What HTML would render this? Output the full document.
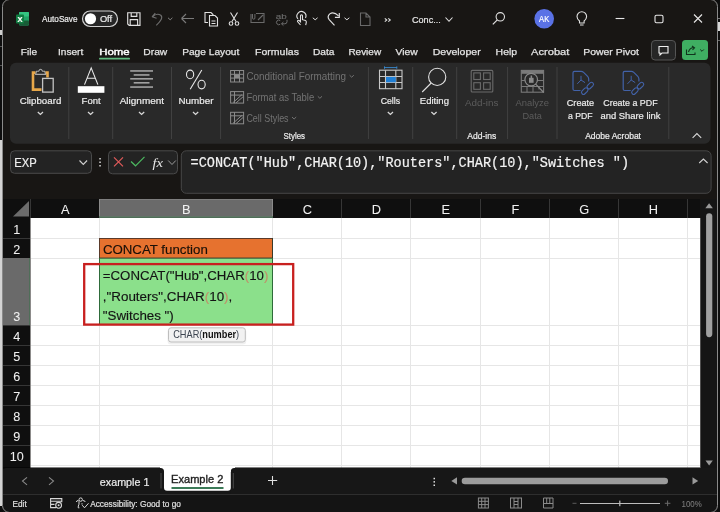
<!DOCTYPE html>
<html><head><meta charset="utf-8"><title>Excel CONCAT</title>
<style>html,body{margin:0;padding:0;background:#0d0d0d;width:720px;height:512px;overflow:hidden}svg{display:block;will-change:transform}</style>
</head><body><svg width="720" height="512" viewBox="0 0 720 512" font-family='"Liberation Sans", sans-serif'><rect x="0" y="0" width="720" height="512" fill="#0d0d0d"/>
<rect x="0" y="140" width="2" height="366" fill="#d4d4d4"/>
<rect x="0" y="30" width="2" height="5" fill="#cfcfcf"/>
<rect x="0" y="46" width="2" height="1" fill="#555555"/>
<rect x="0" y="65" width="2" height="1" fill="#555555"/>
<rect x="718" y="18" width="2" height="1" fill="#777777"/>
<rect x="718" y="22" width="2" height="9" fill="#d8d8d8"/>
<rect x="718" y="40" width="2" height="1" fill="#666666"/>
<rect x="2" y="-1" width="716" height="514" fill="#181614" rx="7"/>
<rect x="19" y="12" width="10" height="13.5" fill="#21a366" rx="1"/>
<rect x="19" y="12" width="10" height="4.5" fill="#33c481" rx="1"/>
<rect x="19" y="20.5" width="10" height="4.5" fill="#185c37" rx="1"/>
<rect x="16" y="14.5" width="8" height="9" fill="#107c41" rx="1"/>
<text x="17.6" y="22.3" font-size="7.5" fill="#ffffff" font-weight="bold" stroke="#ffffff" stroke-width="0.2">X</text>
<text x="42.1" y="22.15" font-size="8.9" fill="#ececec" textLength="35.4" lengthAdjust="spacingAndGlyphs" stroke="#ececec" stroke-width="0.2">AutoSave</text>
<rect x="82.5" y="11" width="35" height="15.5" fill="#262626" rx="7.75" stroke="#cfcfcf" stroke-width="1.2"/>
<circle cx="90.5" cy="18.75" r="5.6" fill="#ffffff"/>
<text x="99.9" y="22.15" font-size="9.1" fill="#ececec" textLength="12.2" lengthAdjust="spacingAndGlyphs" stroke="#ececec" stroke-width="0.2">Off</text>
<path d="M127.7 12.7 H140 V25.4 H129.2 L127.7 23.9 Z M131.2 12.7 V16.4 H136.8 V12.7 M130.2 25.4 V19.6 H137.6 V25.4" stroke="#e0e0e0" stroke-width="1.15" fill="none"/>
<path d="M152 16.8 L155.3 13.2 M152 16.8 L156.6 18.2 M152.4 16.7 Q157 12.6 160.8 15.3 Q164 18.2 156.3 25.3" stroke="#6e6e6e" stroke-width="1.15" fill="none"/>
<path d="M168 17.8 l2.2 2 l2.2 -2" stroke="#8a8a8a" stroke-width="0.9" fill="none"/>
<path d="M181.5 18.5 h12.5 M181.5 18.5 l4.5 -4.5 M181.5 18.5 l4.5 4.5" stroke="#7a7a7a" stroke-width="1.1" fill="none"/>
<path d="M208 22.5 h-3 v-10 h6 l2 2 v1" stroke="#e0e0e0" stroke-width="1.1" fill="none"/>
<path d="M209.5 15.5 h5.5 l2.5 2.5 v8 h-8 z" stroke="#e0e0e0" stroke-width="1.1" fill="none"/>
<path d="M211.5 21 h4 M211.5 23.5 h4" stroke="#e0e0e0" stroke-width="1" fill="none"/>
<path d="M230.5 12.5 l5.5 9 M237.5 12.5 l-5.5 9" stroke="#e0e0e0" stroke-width="1.1" fill="none"/>
<circle cx="231" cy="23.5" r="1.8" stroke="#e0e0e0" stroke-width="1.1" fill="none"/><circle cx="237" cy="23.5" r="1.8" stroke="#e0e0e0" stroke-width="1.1" fill="none"/>
<path d="M251 14 v8.5 h13 v-9 h-8 M258 20 l5 -5" stroke="#6a6a6a" stroke-width="1.1" fill="none"/>
<path d="M252.5 14 v4 a1.2 1.2 0 0 0 2.4 0 v-4" stroke="#6a6a6a" stroke-width="1" fill="none"/>
<text x="275.8" y="18.6" font-size="7.6" fill="#6e6e6e" textLength="11" lengthAdjust="spacingAndGlyphs" stroke="#6e6e6e" stroke-width="0.1">ab</text>
<path d="M280.2 20.6 a2.3 2.3 0 1 0 0 3.6" stroke="#6e6e6e" stroke-width="1" fill="none"/>
<path d="M287 19.8 v1.8 q0 2.2 -2.2 2.2 h-3.2 M283.4 22 l-1.9 1.8 l1.9 1.8" stroke="#6e6e6e" stroke-width="1" fill="none"/>
<path d="M298 19 a4.5 4.5 0 1 1 7.5 -1 M300.5 25 l-3 -3.5 a1 1 0 0 1 1.6 -1 l1.4 1.2 v-6 a1 1 0 0 1 2 0 v4 l3 .8 q1 .4 .8 1.8 l-.6 2.8" stroke="#e0e0e0" stroke-width="1.1" fill="none"/>
<path d="M312.8 17.8 l2.4 2 l2.4 -2" stroke="#e0e0e0" stroke-width="1" fill="none"/>
<path d="M334.5 25.3 L329.2 19.6 Q326.8 16.6 329.8 13.9 Q333.6 11.2 338.6 15.9" stroke="#e0e0e0" stroke-width="1.15" fill="none"/>
<path d="M339.3 12.9 V17.3 H334.9" stroke="#e0e0e0" stroke-width="1.15" fill="none"/>
<path d="M344.5 17.8 l2.4 2 l2.4 -2" stroke="#e0e0e0" stroke-width="1" fill="none"/>
<path d="M360.5 13 h5.5 l4 4 v8.5 h-9.5 z M366 13 v4 h4" stroke="#6a6a6a" stroke-width="1.1" fill="none"/>
<path d="M384.8 18.3 l2 1.7 l-2 1.7 M388.3 18.3 l2 1.7 l-2 1.7" stroke="#e0e0e0" stroke-width="1.1" fill="none"/>
<text x="412" y="22.8" font-size="9.7" fill="#e8e8e8" textLength="28.8" lengthAdjust="spacingAndGlyphs" stroke="#e8e8e8" stroke-width="0.2">Conc...</text>
<path d="M445.5 17.5 l3.5 3.8 l3.5 -3.8" stroke="#e0e0e0" stroke-width="1.1" fill="none"/>
<circle cx="500.3" cy="16.8" r="4.2" stroke="#e0e0e0" stroke-width="1.1" fill="none"/>
<path d="M497.3 19.8 l-4.5 4.5" stroke="#e0e0e0" stroke-width="1.2" fill="none"/>
<circle cx="544.2" cy="18.7" r="9.8" fill="#5a72e6"/>
<text x="539.1" y="22" font-size="8.9" fill="#ffffff" textLength="10.1" lengthAdjust="spacingAndGlyphs" stroke="#ffffff" stroke-width="0.2">AK</text>
<path d="M579.5 21 q-2.5 -2 -2.5 -4.5 a4.8 4.8 0 0 1 9.6 0 q0 2.5 -2.5 4.5 v2 h-4.6 z M580 25 h3.6" stroke="#e0e0e0" stroke-width="1.1" fill="none"/>
<path d="M615.6 18.5 h8.8" stroke="#e8e8e8" stroke-width="1.1" fill="none"/>
<rect x="655" y="15.2" width="8" height="7.5" fill="none" rx="1.5" stroke="#e8e8e8" stroke-width="1.1"/>
<path d="M694 14.5 l8 8 M702 14.5 l-8 8" stroke="#e8e8e8" stroke-width="1.1" fill="none"/>
<text x="20.8" y="54.85" font-size="9.9" fill="#e4e4e4" textLength="16.2" lengthAdjust="spacingAndGlyphs" stroke="#e4e4e4" stroke-width="0.25">File</text>
<text x="58" y="54.85" font-size="9.9" fill="#e4e4e4" textLength="25.3" lengthAdjust="spacingAndGlyphs" stroke="#e4e4e4" stroke-width="0.25">Insert</text>
<text x="99.3" y="54.85" font-size="9.9" fill="#ffffff" textLength="30.3" lengthAdjust="spacingAndGlyphs" stroke="#ffffff" stroke-width="0.45">Home</text>
<text x="143.3" y="54.85" font-size="9.9" fill="#e4e4e4" textLength="24" lengthAdjust="spacingAndGlyphs" stroke="#e4e4e4" stroke-width="0.25">Draw</text>
<text x="182.2" y="54.85" font-size="9.9" fill="#e4e4e4" textLength="57.1" lengthAdjust="spacingAndGlyphs" stroke="#e4e4e4" stroke-width="0.25">Page Layout</text>
<text x="255.1" y="54.85" font-size="9.9" fill="#e4e4e4" textLength="43.8" lengthAdjust="spacingAndGlyphs" stroke="#e4e4e4" stroke-width="0.25">Formulas</text>
<text x="312.9" y="54.85" font-size="9.9" fill="#e4e4e4" textLength="21.5" lengthAdjust="spacingAndGlyphs" stroke="#e4e4e4" stroke-width="0.25">Data</text>
<text x="348.4" y="54.85" font-size="9.9" fill="#e4e4e4" textLength="32.7" lengthAdjust="spacingAndGlyphs" stroke="#e4e4e4" stroke-width="0.25">Review</text>
<text x="395.6" y="54.85" font-size="9.9" fill="#e4e4e4" textLength="22.2" lengthAdjust="spacingAndGlyphs" stroke="#e4e4e4" stroke-width="0.25">View</text>
<text x="432.7" y="54.85" font-size="9.9" fill="#e4e4e4" textLength="48" lengthAdjust="spacingAndGlyphs" stroke="#e4e4e4" stroke-width="0.25">Developer</text>
<text x="495.6" y="54.85" font-size="9.9" fill="#e4e4e4" textLength="21.5" lengthAdjust="spacingAndGlyphs" stroke="#e4e4e4" stroke-width="0.25">Help</text>
<text x="531.1" y="54.85" font-size="9.9" fill="#e4e4e4" textLength="38.3" lengthAdjust="spacingAndGlyphs" stroke="#e4e4e4" stroke-width="0.25">Acrobat</text>
<text x="583.3" y="54.85" font-size="9.9" fill="#e4e4e4" textLength="55.6" lengthAdjust="spacingAndGlyphs" stroke="#e4e4e4" stroke-width="0.25">Power Pivot</text>
<rect x="99" y="57.8" width="31" height="1.8" fill="#5fb97e" rx="0.9"/>
<rect x="651.5" y="40.5" width="24" height="19.5" fill="#262626" rx="3.5" stroke="#555555" stroke-width="1"/>
<path d="M659 46.5 h9 v6.5 h-6 l-2 2 v-2 h-1 z" stroke="#f0f0f0" stroke-width="1.1" fill="none"/>
<rect x="682" y="40" width="26" height="20" fill="#3fae62" rx="3.5"/>
<path d="M686.5 49.5 v5 h8.5 v-2 M688.5 52 q1 -4 5 -4.5 M692 46 l2.5 1.8 l-2 2" stroke="#10331c" stroke-width="1.1" fill="none"/>
<path d="M700.2 49.5 l1.8 1.8 l1.8 -1.8" stroke="#10331c" stroke-width="1" fill="none"/>
<rect x="10" y="62.7" width="700.5" height="81" fill="#292929" rx="6"/>
<rect x="68.3" y="67" width="1" height="72" fill="#414141"/>
<rect x="112.2" y="67" width="1" height="72" fill="#414141"/>
<rect x="171.0" y="67" width="1" height="72" fill="#414141"/>
<rect x="220.1" y="67" width="1" height="72" fill="#414141"/>
<rect x="367.9" y="67" width="1" height="72" fill="#414141"/>
<rect x="412.2" y="67" width="1" height="72" fill="#414141"/>
<rect x="456.2" y="67" width="1" height="72" fill="#414141"/>
<rect x="507.1" y="67" width="1" height="72" fill="#414141"/>
<rect x="556.5" y="67" width="1" height="72" fill="#414141"/>
<rect x="668.3" y="67" width="1" height="72" fill="#414141"/>
<path d="M35.6 72.6 H33 V89.6 H41.5 M45.3 72.6 H47.5 V77.5" stroke="#e8a84a" stroke-width="2.6" fill="none" stroke-linejoin="miter"/>
<path d="M35.6 74.4 L36.6 71.2 H38.6 Q40.6 67.2 42.6 71.2 H44.6 L45.6 74.4 Z" stroke="#a8a8a8" stroke-width="1.1" fill="none"/>
<rect x="42.6" y="78.4" width="10.6" height="13.7" fill="#292929" stroke="#c4c4c4" stroke-width="1.3"/>
<text x="19.7" y="103.8" font-size="9.7" fill="#ececec" textLength="41.6" lengthAdjust="spacingAndGlyphs" stroke="#ececec" stroke-width="0.2">Clipboard</text>
<path d="M37.8 112 l2.6 2.4 l2.6 -2.4" stroke="#d8d8d8" stroke-width="1.3" fill="none"/>
<path d="M84.5 84.6 l6.7 -16.7 l6.7 16.7 M87 78.3 h8.5" stroke="#e8e8e8" stroke-width="1.1" fill="none"/>
<rect x="77.8" y="86.2" width="26.6" height="6.6" fill="#ffffff"/>
<text x="81.6" y="104" font-size="9.9" fill="#ececec" textLength="19" lengthAdjust="spacingAndGlyphs" stroke="#ececec" stroke-width="0.2">Font</text>
<path d="M88.0 112 l2.6 2.4 l2.6 -2.4" stroke="#d8d8d8" stroke-width="1.3" fill="none"/>
<rect x="130.2" y="70.30000000000001" width="22.8" height="1.3" fill="#bdbdbd"/>
<rect x="133.7" y="74.30000000000001" width="15.8" height="1.3" fill="#bdbdbd"/>
<rect x="130.2" y="78.2" width="22.8" height="1.3" fill="#bdbdbd"/>
<rect x="133.7" y="82.2" width="15.8" height="1.3" fill="#bdbdbd"/>
<rect x="130.2" y="86.4" width="22.8" height="1.3" fill="#bdbdbd"/>
<text x="119.7" y="104" font-size="9.9" fill="#ececec" textLength="44.4" lengthAdjust="spacingAndGlyphs" stroke="#ececec" stroke-width="0.2">Alignment</text>
<path d="M139.0 112 l2.6 2.4 l2.6 -2.4" stroke="#d8d8d8" stroke-width="1.3" fill="none"/>
<ellipse cx="190.1" cy="74.4" rx="3.6" ry="4.3" stroke="#e8e8e8" stroke-width="1.1" fill="none"/>
<ellipse cx="201.6" cy="84.6" rx="3.6" ry="4.3" stroke="#e8e8e8" stroke-width="1.1" fill="none"/>
<path d="M201.8 70 l-11.6 19.2" stroke="#e8e8e8" stroke-width="1.1" fill="none"/>
<text x="178.5" y="104" font-size="9.9" fill="#ececec" textLength="34.9" lengthAdjust="spacingAndGlyphs" stroke="#ececec" stroke-width="0.2">Number</text>
<path d="M193.0 112 l2.6 2.4 l2.6 -2.4" stroke="#d8d8d8" stroke-width="1.3" fill="none"/>
<rect x="230.6" y="70.5" width="13" height="11.5" fill="none" stroke="#8a8a8a" stroke-width="1"/>
<rect x="230.6" y="91.6" width="13" height="11.5" fill="none" stroke="#8a8a8a" stroke-width="1"/>
<rect x="230.6" y="112.3" width="13" height="11.5" fill="none" stroke="#8a8a8a" stroke-width="1"/>
<path d="M234.5 70.5 v11.5 M239.5 70.5 v11.5 M230.6 74.3 h13 M230.6 78.1 h13" stroke="#8a8a8a" stroke-width="1" fill="none"/>
<rect x="234.5" y="74.3" width="5" height="3.8" fill="#8a8a8a"/>
<path d="M230.6 95.1 h13 M234.5 91.6 v11.5 M233 102.6 l9 -8 M236 102.89999999999999 l7.5 -6.5" stroke="#8a8a8a" stroke-width="1" fill="none"/>
<path d="M230.6 115.8 h13 M234.5 112.3 v11.5 M233 123.3 l9 -8 M236 123.6 l7.5 -6.5" stroke="#8a8a8a" stroke-width="1" fill="none"/>
<text x="246.4" y="79.7" font-size="10.1" fill="#737373" textLength="99.6" lengthAdjust="spacingAndGlyphs">Conditional Formatting</text>
<text x="246.4" y="100.8" font-size="10.1" fill="#737373" textLength="67.8" lengthAdjust="spacingAndGlyphs">Format as Table</text>
<text x="246.4" y="121.5" font-size="10.1" fill="#737373" textLength="42.2" lengthAdjust="spacingAndGlyphs">Cell Styles</text>
<path d="M349.6 75.2 l2.1 2 l2.1 -2" stroke="#737373" stroke-width="1" fill="none"/>
<path d="M317.8 96.3 l2.1 2 l2.1 -2" stroke="#737373" stroke-width="1" fill="none"/>
<path d="M292 117 l2.1 2 l2.1 -2" stroke="#737373" stroke-width="1" fill="none"/>
<text x="283.6" y="138.8" font-size="8.4" fill="#ececec" textLength="21.4" lengthAdjust="spacingAndGlyphs" stroke="#ececec" stroke-width="0.2">Styles</text>
<rect x="379.5" y="70.2" width="22.5" height="18.5" fill="none" stroke="#c8c8c8" stroke-width="1.1"/>
<path d="M385.5 70.2 v18.5 M395.8 70.2 v18.5 M379.5 76.5 h22.5 M379.5 82.5 h22.5" stroke="#c8c8c8" stroke-width="1.1" fill="none"/>
<rect x="386" y="76.9" width="9.8" height="5.4" fill="#1f7fd6"/>
<path d="M384.5 67.6 h12.3 M384.5 66.4 v2.4 M396.8 66.4 v2.4" stroke="#3a8fd8" stroke-width="0.9" fill="none"/>
<text x="380.7" y="104" font-size="9.9" fill="#ececec" textLength="19.4" lengthAdjust="spacingAndGlyphs" stroke="#ececec" stroke-width="0.2">Cells</text>
<path d="M387.79999999999995 112 l2.6 2.4 l2.6 -2.4" stroke="#d8d8d8" stroke-width="1.3" fill="none"/>
<circle cx="437.2" cy="76.9" r="8.6" stroke="#e0e0e0" stroke-width="1.1" fill="none"/>
<path d="M431.2 83 l-9 9" stroke="#e0e0e0" stroke-width="1.1" fill="none"/>
<text x="419.8" y="104" font-size="9.9" fill="#ececec" textLength="29.2" lengthAdjust="spacingAndGlyphs" stroke="#ececec" stroke-width="0.2">Editing</text>
<path d="M431.4 112 l2.6 2.4 l2.6 -2.4" stroke="#d8d8d8" stroke-width="1.3" fill="none"/>
<rect x="471.2" y="70.4" width="21.6" height="21.6" fill="none" rx="1" stroke="#6a6a6a" stroke-width="1.1"/>
<rect x="473.8" y="72.9" width="6.6" height="6.6" fill="none" stroke="#6a6a6a" stroke-width="1.1"/>
<rect x="473.8" y="82.7" width="6.6" height="6.6" fill="none" stroke="#6a6a6a" stroke-width="1.1"/>
<rect x="483.6" y="72.9" width="6.6" height="6.6" fill="none" stroke="#6a6a6a" stroke-width="1.1"/>
<rect x="483.6" y="82.7" width="6.6" height="6.6" fill="none" stroke="#6a6a6a" stroke-width="1.1"/>
<text x="465" y="106" font-size="9.9" fill="#5c5c5c" textLength="33.4" lengthAdjust="spacingAndGlyphs">Add-ins</text>
<text x="467.2" y="138.8" font-size="8.4" fill="#ececec" textLength="29" lengthAdjust="spacingAndGlyphs" stroke="#ececec" stroke-width="0.2">Add-ins</text>
<rect x="521.3" y="70.4" width="22.3" height="21.8" fill="none" stroke="#7a7a7a" stroke-width="1.1"/>
<rect x="521.3" y="70.4" width="22.3" height="3.4" fill="#7a7a7a"/>
<path d="M521.3 80.5 h3.5 M537.5 80.5 h6.1 M521.3 86.5 h22.3 M527 86.5 v5.7 M533 86.5 v5.7 M539 86.5 v3" stroke="#7a7a7a" stroke-width="1" fill="none"/>
<circle cx="531.2" cy="79.6" r="6.3" stroke="#8a8a8a" stroke-width="1.2" fill="#292929"/>
<rect x="529" y="77.8" width="4.6" height="5" fill="#8a8a8a"/>
<rect x="530.6" y="75.5" width="1.5" height="2.5" fill="#8a8a8a"/>
<path d="M535.7 84.2 l8 8.3" stroke="#8a8a8a" stroke-width="1.2" fill="none"/>
<text x="515.4" y="106" font-size="9.9" fill="#5c5c5c" textLength="33.5" lengthAdjust="spacingAndGlyphs">Analyze</text>
<text x="522.4" y="118.8" font-size="9.9" fill="#5c5c5c" textLength="19.4" lengthAdjust="spacingAndGlyphs">Data</text>
<path d="M580.5 90.5 H574.5 Q573 90.5 573 89 V72.8 Q573 71.3 574.5 71.3 H581 Q582.5 71.3 583.6 72.4 L587.6 76.4 Q588.7 77.5 588.7 79 V81.5" stroke="#4262a8" stroke-width="1.2" fill="none"/>
<path d="M577.3 83.8 L581 80 L585 82.6 M581 80 V75.8" stroke="#4262a8" stroke-width="1" fill="none"/>
<rect x="581" y="89.1" width="7.5" height="4" rx="2" transform="rotate(-45 584.75 91.1)" stroke="#4262a8" stroke-width="1.1" fill="none"/>
<rect x="586.5" y="83.6" width="7.5" height="4" rx="2" transform="rotate(-45 590.25 85.6)" stroke="#4262a8" stroke-width="1.1" fill="none"/>
<path d="M630.7 90.5 H624.7 Q623.2 90.5 623.2 89 V72.8 Q623.2 71.3 624.7 71.3 H631.2 Q632.7 71.3 633.8000000000001 72.4 L637.8000000000001 76.4 Q638.9000000000001 77.5 638.9000000000001 79 V81.5" stroke="#4262a8" stroke-width="1.2" fill="none"/>
<path d="M627.5 83.8 L631.2 80 L635.2 82.6 M631.2 80 V75.8" stroke="#4262a8" stroke-width="1" fill="none"/>
<rect x="631.2" y="89.1" width="7.5" height="4" rx="2" transform="rotate(-45 634.95 91.1)" stroke="#4262a8" stroke-width="1.1" fill="none"/>
<rect x="636.7" y="83.6" width="7.5" height="4" rx="2" transform="rotate(-45 640.45 85.6)" stroke="#4262a8" stroke-width="1.1" fill="none"/>
<text x="566.8" y="106" font-size="9.6" fill="#ececec" textLength="27.3" lengthAdjust="spacingAndGlyphs" stroke="#ececec" stroke-width="0.2">Create</text>
<text x="568" y="118.8" font-size="9.6" fill="#ececec" textLength="24.6" lengthAdjust="spacingAndGlyphs" stroke="#ececec" stroke-width="0.2">a PDF</text>
<text x="603.3" y="106" font-size="9.6" fill="#ececec" textLength="54.3" lengthAdjust="spacingAndGlyphs" stroke="#ececec" stroke-width="0.2">Create a PDF</text>
<text x="600.5" y="118.8" font-size="9.6" fill="#ececec" textLength="60" lengthAdjust="spacingAndGlyphs" stroke="#ececec" stroke-width="0.2">and Share link</text>
<text x="585.2" y="138.8" font-size="8.4" fill="#ececec" textLength="55.8" lengthAdjust="spacingAndGlyphs" stroke="#ececec" stroke-width="0.2">Adobe Acrobat</text>
<path d="M692.6 137.8 l4.3 -4.3 l4.3 4.3" stroke="#d8d8d8" stroke-width="1.1" fill="none"/>
<rect x="10.5" y="150.8" width="81" height="22.5" fill="#232323" rx="4" stroke="#4a4a4a" stroke-width="1"/>
<text x="14.2" y="166.7" font-size="13.6" fill="#f0f0f0" textLength="22.5" lengthAdjust="spacingAndGlyphs" stroke="#f0f0f0" stroke-width="0.2">EXP</text>
<path d="M79.5 160.5 l3.8 4 l3.8 -4" stroke="#d0d0d0" stroke-width="1.1" fill="none"/>
<rect x="99.3" y="158.0" width="1.5" height="1.5" fill="#d8d8d8"/>
<rect x="99.3" y="161.5" width="1.5" height="1.5" fill="#d8d8d8"/>
<rect x="99.3" y="165.0" width="1.5" height="1.5" fill="#d8d8d8"/>
<rect x="108.5" y="150.8" width="69" height="23" fill="#232323" rx="4" stroke="#4a4a4a" stroke-width="1"/>
<path d="M114 157.3 l9 9 M123 157.3 l-9 9" stroke="#e05a5a" stroke-width="1.2" fill="none"/>
<path d="M131 161.5 l4.5 4.3 l9 -9" stroke="#4cb860" stroke-width="1.2" fill="none"/>
<text x="152.5" y="166.5" font-size="12.5" fill="#e8e8e8" font-family='"Liberation Serif", serif' textLength="10.5" lengthAdjust="spacingAndGlyphs" font-style="italic">fx</text>
<path d="M168.2 160.5 l3.8 4 l3.8 -4" stroke="#9a9a9a" stroke-width="1" fill="none"/>
<rect x="181.3" y="150.8" width="529.8" height="42.5" fill="#232323" rx="5" stroke="#474747" stroke-width="1"/>
<text x="190.6" y="166.8" font-size="14" fill="#f2f2f2" font-family='"Liberation Mono", monospace' textLength="438.5" lengthAdjust="spacingAndGlyphs" stroke="#f2f2f2" stroke-width="0.2">=CONCAT(&quot;Hub&quot;,CHAR(10),&quot;Routers&quot;,CHAR(10),&quot;Switches &quot;)</text>
<path d="M699.2 163 l4.2 -4 l4.2 4" stroke="#d0d0d0" stroke-width="1.1" fill="none"/>
<rect x="3" y="199" width="697" height="19" fill="#0f0f0f"/>
<path d="M13 216.5 L29 216.5 L29 201 Z" stroke="none" stroke-width="1" fill="#6c6c6c"/>
<rect x="30" y="199" width="1" height="19" fill="#363636"/>
<rect x="99" y="199" width="1" height="19" fill="#363636"/>
<rect x="272" y="199" width="1" height="19" fill="#363636"/>
<rect x="341" y="199" width="1" height="19" fill="#363636"/>
<rect x="410" y="199" width="1" height="19" fill="#363636"/>
<rect x="480" y="199" width="1" height="19" fill="#363636"/>
<rect x="549" y="199" width="1" height="19" fill="#363636"/>
<rect x="618" y="199" width="1" height="19" fill="#363636"/>
<rect x="687" y="199" width="1" height="19" fill="#363636"/>
<rect x="99" y="199" width="174" height="19" fill="#6a6a6a"/>
<rect x="99" y="199" width="174" height="1" fill="#7e7e7e"/>
<rect x="99" y="199" width="1" height="19" fill="#8a8a8a"/>
<rect x="272" y="199" width="1" height="19" fill="#8a8a8a"/>
<rect x="99" y="216" width="174" height="1" fill="#5f7565"/>
<rect x="99" y="217" width="174" height="1" fill="#4f6e58"/>
<text x="65.3" y="213.8" font-size="12.8" fill="#f0f0f0" text-anchor="middle" stroke="#f0f0f0" stroke-width="0.05">A</text>
<text x="186.3" y="213.8" font-size="12.8" fill="#f0f0f0" text-anchor="middle" stroke="#f0f0f0" stroke-width="0.05">B</text>
<text x="307.3" y="213.8" font-size="12.8" fill="#f0f0f0" text-anchor="middle" stroke="#f0f0f0" stroke-width="0.05">C</text>
<text x="376.3" y="213.8" font-size="12.8" fill="#f0f0f0" text-anchor="middle" stroke="#f0f0f0" stroke-width="0.05">D</text>
<text x="445.8" y="213.8" font-size="12.8" fill="#f0f0f0" text-anchor="middle" stroke="#f0f0f0" stroke-width="0.05">E</text>
<text x="515.3" y="213.8" font-size="12.8" fill="#f0f0f0" text-anchor="middle" stroke="#f0f0f0" stroke-width="0.05">F</text>
<text x="584.3" y="213.8" font-size="12.8" fill="#f0f0f0" text-anchor="middle" stroke="#f0f0f0" stroke-width="0.05">G</text>
<text x="653.3" y="213.8" font-size="12.8" fill="#f0f0f0" text-anchor="middle" stroke="#f0f0f0" stroke-width="0.05">H</text>
<rect x="3" y="218" width="27" height="250" fill="#0f0f0f"/>
<rect x="3" y="238" width="27" height="1" fill="#363636"/>
<rect x="3" y="258" width="27" height="1" fill="#363636"/>
<rect x="3" y="325" width="27" height="1" fill="#363636"/>
<rect x="3" y="345" width="27" height="1" fill="#363636"/>
<rect x="3" y="365" width="27" height="1" fill="#363636"/>
<rect x="3" y="385" width="27" height="1" fill="#363636"/>
<rect x="3" y="405" width="27" height="1" fill="#363636"/>
<rect x="3" y="425" width="27" height="1" fill="#363636"/>
<rect x="3" y="445" width="27" height="1" fill="#363636"/>
<rect x="3" y="258" width="27" height="67" fill="#6a6a6a"/>
<rect x="29" y="258" width="1" height="67" fill="#4f6e58"/>
<rect x="30.5" y="218" width="670" height="250" fill="#ffffff"/>
<rect x="99" y="218" width="1" height="250" fill="#e6e6e6"/>
<rect x="272" y="218" width="1" height="250" fill="#e6e6e6"/>
<rect x="341" y="218" width="1" height="250" fill="#e6e6e6"/>
<rect x="410" y="218" width="1" height="250" fill="#e6e6e6"/>
<rect x="480" y="218" width="1" height="250" fill="#e6e6e6"/>
<rect x="549" y="218" width="1" height="250" fill="#e6e6e6"/>
<rect x="618" y="218" width="1" height="250" fill="#e6e6e6"/>
<rect x="687" y="218" width="1" height="250" fill="#e6e6e6"/>
<rect x="31" y="238" width="669" height="1" fill="#e6e6e6"/>
<rect x="31" y="258" width="669" height="1" fill="#e6e6e6"/>
<rect x="31" y="325" width="669" height="1" fill="#e6e6e6"/>
<rect x="31" y="345" width="669" height="1" fill="#e6e6e6"/>
<rect x="31" y="365" width="669" height="1" fill="#e6e6e6"/>
<rect x="31" y="385" width="669" height="1" fill="#e6e6e6"/>
<rect x="31" y="405" width="669" height="1" fill="#e6e6e6"/>
<rect x="31" y="425" width="669" height="1" fill="#e6e6e6"/>
<rect x="31" y="445" width="669" height="1" fill="#e6e6e6"/>
<rect x="31" y="465" width="669" height="1" fill="#e6e6e6"/>
<text x="16.7" y="233.7" font-size="12.6" fill="#f0f0f0" text-anchor="middle" stroke="#f0f0f0" stroke-width="0.05">1</text>
<text x="16.7" y="254" font-size="12.6" fill="#f0f0f0" text-anchor="middle" stroke="#f0f0f0" stroke-width="0.05">2</text>
<text x="16.7" y="320.7" font-size="12.6" fill="#f0f0f0" text-anchor="middle" stroke="#f0f0f0" stroke-width="0.05">3</text>
<text x="16.7" y="340.8" font-size="12.6" fill="#f0f0f0" text-anchor="middle" stroke="#f0f0f0" stroke-width="0.05">4</text>
<text x="16.7" y="360.8" font-size="12.6" fill="#f0f0f0" text-anchor="middle" stroke="#f0f0f0" stroke-width="0.05">5</text>
<text x="16.7" y="380.8" font-size="12.6" fill="#f0f0f0" text-anchor="middle" stroke="#f0f0f0" stroke-width="0.05">6</text>
<text x="16.7" y="400.8" font-size="12.6" fill="#f0f0f0" text-anchor="middle" stroke="#f0f0f0" stroke-width="0.05">7</text>
<text x="16.7" y="420.8" font-size="12.6" fill="#f0f0f0" text-anchor="middle" stroke="#f0f0f0" stroke-width="0.05">8</text>
<text x="16.7" y="440.8" font-size="12.6" fill="#f0f0f0" text-anchor="middle" stroke="#f0f0f0" stroke-width="0.05">9</text>
<text x="16.7" y="460.6" font-size="12.6" fill="#f0f0f0" text-anchor="middle" stroke="#f0f0f0" stroke-width="0.05">10</text>
<rect x="99" y="238" width="174" height="20" fill="#e6722f"/>
<rect x="99" y="238" width="174" height="1" fill="#5a3a2a"/>
<rect x="99" y="238" width="1" height="20" fill="#5a3a2a"/>
<rect x="272" y="238" width="1" height="20" fill="#3a3a2a"/>
<text x="102.9" y="253.7" font-size="13.2" fill="#1a1008" textLength="104.9" lengthAdjust="spacingAndGlyphs" stroke="#1a1008" stroke-width="0.15">CONCAT function</text>
<rect x="99" y="258" width="174" height="67" fill="#8be08b"/>
<rect x="99" y="257.6" width="174" height="1" fill="#2a3a2a"/>
<rect x="99" y="258" width="1" height="67" fill="#2e6b3a"/>
<rect x="272" y="258" width="1" height="67" fill="#2e6b3a"/>
<text x="102.8" y="280.4" font-size="13.2" textLength="165.5" lengthAdjust="spacingAndGlyphs" stroke-width="0.15"><tspan fill="#141414" stroke="#141414">=CONCAT(&quot;Hub&quot;,CHAR</tspan><tspan fill="#c0906a" stroke="#c0906a">(</tspan><tspan fill="#141414" stroke="#141414">10</tspan><tspan fill="#c0906a" stroke="#c0906a">)</tspan></text>
<text x="102.8" y="300.5" font-size="13.2" textLength="129.5" lengthAdjust="spacingAndGlyphs" stroke-width="0.15"><tspan fill="#141414" stroke="#141414">,&quot;Routers&quot;,CHAR</tspan><tspan fill="#c0906a" stroke="#c0906a">(</tspan><tspan fill="#141414" stroke="#141414">10</tspan><tspan fill="#c0906a" stroke="#c0906a">)</tspan><tspan fill="#141414" stroke="#141414">,</tspan></text>
<text x="102.8" y="319.9" font-size="13.2" textLength="71" lengthAdjust="spacingAndGlyphs" stroke-width="0.15"><tspan fill="#141414" stroke="#141414">&quot;Switches &quot;)</tspan></text>
<rect x="84.2" y="264.1" width="209" height="60.5" fill="none" stroke="#c8201f" stroke-width="2.3"/>
<rect x="167.5" y="328.5" width="78.8" height="16" fill="#000000" rx="3.5" opacity="0.06"/>
<rect x="168.5" y="327.8" width="76.8" height="14.2" fill="#f2f2f2" rx="2.5" stroke="#b8b8b8" stroke-width="0.9"/>
<text x="173.2" y="337.6" font-size="10.2" textLength="66" lengthAdjust="spacingAndGlyphs"><tspan fill="#3c4450">CHAR(</tspan><tspan fill="#111" font-weight="bold">number</tspan><tspan fill="#3c4450">)</tspan></text>
<rect x="700.5" y="199" width="17" height="269" fill="#151515"/>
<path d="M705.3 208.3 l3.8 -5 l3.8 5 z" stroke="none" stroke-width="1" fill="#9a9a9a"/>
<rect x="706.1" y="213.2" width="6.2" height="124" fill="#a0a0a0" rx="3.1"/>
<path d="M705.5 460.5 h7.3 l-3.65 5 z" stroke="none" stroke-width="1" fill="#9a9a9a"/>
<rect x="3" y="468" width="714" height="26" fill="#171717"/>
<rect x="3" y="467.5" width="697" height="1" fill="#000000"/>
<rect x="160" y="466" width="8" height="6" fill="#ffffff"/>
<rect x="227" y="466" width="8" height="6" fill="#ffffff"/>
<rect x="3" y="468" width="161" height="26" fill="#171717" rx="3.5"/>
<rect x="230.8" y="468" width="486" height="26" fill="#171717" rx="3.5"/>
<rect x="3" y="476" width="161" height="18" fill="#171717"/>
<rect x="230.8" y="476" width="486" height="18" fill="#171717"/>
<rect x="164" y="466" width="66.8" height="24.8" fill="#ffffff" rx="3"/>
<rect x="164" y="466" width="66.8" height="4" fill="#ffffff"/>
<path d="M27 477.3 l-4.5 3.8 l4.5 3.8" stroke="#8a8a8a" stroke-width="1.1" fill="none"/>
<path d="M49 477.3 l4.5 3.8 l-4.5 3.8" stroke="#8a8a8a" stroke-width="1.1" fill="none"/>
<text x="99.8" y="485.75" font-size="10.8" fill="#ececec" textLength="49.6" lengthAdjust="spacingAndGlyphs" stroke="#ececec" stroke-width="0.2">example 1</text>
<rect x="160.5" y="473" width="1" height="15.5" fill="#4a4a4a"/>
<rect x="232.8" y="473" width="1" height="15.5" fill="#4a4a4a"/>
<text x="171.1" y="482.9" font-size="11.05" fill="#222222" textLength="52.2" lengthAdjust="spacingAndGlyphs" stroke="#222222" stroke-width="0.35">Example 2</text>
<rect x="171.5" y="487" width="52" height="2" fill="#3b7a57"/>
<path d="M272.5 475.9 v9.2 M268 480.5 h9.2" stroke="#e0e0e0" stroke-width="1.1" fill="none"/>
<rect x="433.5" y="477.8" width="1.5" height="1.5" fill="#e0e0e0"/>
<rect x="433.5" y="481.1" width="1.5" height="1.5" fill="#e0e0e0"/>
<rect x="433.5" y="484.5" width="1.5" height="1.5" fill="#e0e0e0"/>
<path d="M451.3 480.9 l5.7 -3.6 v7.2 z" stroke="none" stroke-width="1" fill="#9a9a9a"/>
<rect x="461.7" y="477.7" width="206.3" height="6.6" fill="#9c9c9c" rx="3.3"/>
<path d="M698.2 480.9 l-5.7 -3.6 v7.2 z" stroke="none" stroke-width="1" fill="#9a9a9a"/>
<rect x="3" y="494" width="714" height="1" fill="#2e2e2e"/>
<rect x="3" y="495" width="714" height="20" fill="#141414"/>
<text x="12.5" y="506.7" font-size="9" fill="#e0e0e0" textLength="14.2" lengthAdjust="spacingAndGlyphs" stroke="#e0e0e0" stroke-width="0.2">Edit</text>
<path d="M56 507.6 H50.6 V498.6 H61.8 V502.2 M50.6 501.2 H61.8 M50.6 504.4 H54.5" stroke="#d8d8d8" stroke-width="1.1" fill="none"/>
<circle cx="58.6" cy="505.3" r="2.9" stroke="#d8d8d8" stroke-width="1.1" fill="none"/><circle cx="58.6" cy="505.3" r="1" fill="#d8d8d8"/>
<circle cx="80.7" cy="499.6" r="1.7" stroke="#d8d8d8" stroke-width="1" fill="none"/>
<path d="M76.3 502 Q76.5 500.3 78.6 500.6 M82.8 500.6 Q84.9 500.3 85.2 502 M79 501.2 V504.2 Q78 506 78.2 507.8 H79.4 M82 503.2 V504.5 M82.2 505.2 l2.3 2.6 l4 -4.5" stroke="#d8d8d8" stroke-width="1" fill="none"/>
<text x="90.2" y="506.8" font-size="9" fill="#e0e0e0" textLength="90.8" lengthAdjust="spacingAndGlyphs" stroke="#e0e0e0" stroke-width="0.2">Accessibility: Good to go</text>
<rect x="478.4" y="498" width="10" height="10" fill="none" stroke="#8a8a8a" stroke-width="1"/>
<path d="M481.7 498 v10 M485 498 v10 M478.4 501.3 h10 M478.4 504.6 h10" stroke="#8a8a8a" stroke-width="1" fill="none"/>
<rect x="510.5" y="498" width="11" height="10" fill="none" stroke="#8a8a8a" stroke-width="1"/>
<path d="M514 498 V508 M518 498 V508 M514 501.5 H518 M514 504.5 H518" stroke="#8a8a8a" stroke-width="1" fill="none"/>
<path d="M543.5 508 V498 H553 V508 Z M543.5 503.5 H553 M546.7 498 V503.5 M549.8 498 V503.5" stroke="#8a8a8a" stroke-width="1" fill="none"/>
<path d="M572.5 503.3 h4" stroke="#5a5a5a" stroke-width="1" fill="none"/>
<rect x="580" y="503" width="80" height="1" fill="#bdbdbd"/>
<rect x="619.2" y="500.6" width="1.2" height="5.6" fill="#bdbdbd"/>
<path d="M664.8 503.3 h5.6 M667.6 500.5 v5.6" stroke="#6a6a6a" stroke-width="1" fill="none"/>
<text x="681.5" y="506.9" font-size="8.8" fill="#7a7a7a" textLength="20.2" lengthAdjust="spacingAndGlyphs" stroke="#7a7a7a" stroke-width="0.1">100%</text>
<rect x="2.5" y="-0.5" width="715" height="513" fill="none" rx="7" stroke="#8a8a8a" stroke-width="1"/></svg></body></html>
